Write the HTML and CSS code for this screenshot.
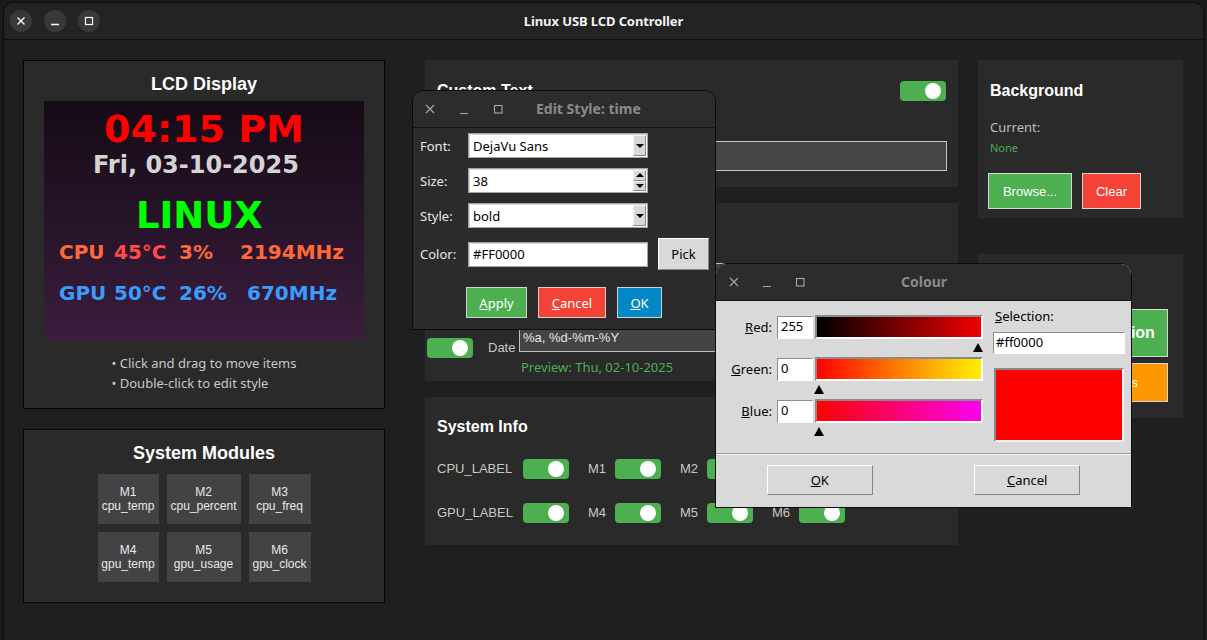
FILE: index.html
```html
<!DOCTYPE html>
<html lang="en">
<head>
<meta charset="utf-8">
<title>Linux USB LCD Controller</title>
<link rel="stylesheet" href="styles.css">
</head>
<body>
<div class="desktop">
  <div class="window">
    <header class="titlebar">
      <div class="wm-buttons">
        <span class="wm-btn"><svg width="10" height="10" viewBox="0 0 10 10"><path d="M1.5 1.5L8.5 8.5M8.5 1.5L1.5 8.5" stroke="#fff" stroke-width="1.3" fill="none"/></svg></span>
        <span class="wm-btn"><svg width="10" height="10" viewBox="0 0 10 10"><path d="M1 8.5H9" stroke="#fff" stroke-width="1.3" fill="none"/></svg></span>
        <span class="wm-btn"><svg width="10" height="10" viewBox="0 0 10 10"><rect x="1.5" y="1.5" width="7" height="7" stroke="#fff" stroke-width="1.2" fill="none"/></svg></span>
      </div>
      <div class="wm-title">Linux USB LCD Controller</div>
      <div></div>
    </header>

    <main class="content">
      <div class="col col-left">
        <section class="panel lcd-panel">
          <h2 class="panel-title">LCD Display</h2>
          <div class="lcd">
            <span class="lcd-item lcd-time">04:15 PM</span>
            <span class="lcd-item lcd-date">Fri, 03-10-2025</span>
            <span class="lcd-item lcd-linux">LINUX</span>
            <span class="lcd-item lcd-small cpu c1">CPU</span>
            <span class="lcd-item lcd-small cpu-temp c2">45°C</span>
            <span class="lcd-item lcd-small cpu c3">3%</span>
            <span class="lcd-item lcd-small cpu c4">2194MHz</span>
            <span class="lcd-item lcd-small gpu c1 r2">GPU</span>
            <span class="lcd-item lcd-small gpu c2 r2">50°C</span>
            <span class="lcd-item lcd-small gpu c3 r2">26%</span>
            <span class="lcd-item lcd-small gpu c4b r2">670MHz</span>
          </div>
          <div class="hint">
            <p>• Click and drag to move items</p>
            <p>• Double-click to edit style</p>
          </div>
        </section>

        <section class="panel modules-panel">
          <h2 class="panel-title">System Modules</h2>
          <div class="module-grid">
            <div class="module"><span>M1</span><span>cpu_temp</span></div>
            <div class="module"><span>M2</span><span>cpu_percent</span></div>
            <div class="module"><span>M3</span><span>cpu_freq</span></div>
            <div class="module"><span>M4</span><span>gpu_temp</span></div>
            <div class="module"><span>M5</span><span>gpu_usage</span></div>
            <div class="module"><span>M6</span><span>gpu_clock</span></div>
          </div>
        </section>
      </div>

      <div class="col col-mid">
        <section class="card custom-card">
          <div class="card-head">
            <h3 class="card-title">Custom Text</h3>
            <span class="toggle"></span>
          </div>
          <div class="text-entry"></div>
        </section>

        <section class="card date-card">
          <div class="card-title-space"></div>
          <div class="dt-row time-row">
            <span class="toggle"></span>
            <span class="dt-label"></span>
            <div class="dt-field">
              <div class="fmt-entry"></div>
              <div class="preview-space"></div>
            </div>
          </div>
          <div class="dt-row date-row">
            <span class="toggle"></span>
            <span class="dt-label">Date</span>
            <div class="dt-field">
              <div class="fmt-entry">%a, %d-%m-%Y</div>
              <div class="preview">Preview: Thu, 02-10-2025</div>
            </div>
          </div>
        </section>

        <section class="card sys-card">
          <h3 class="card-title">System Info</h3>
          <div class="sys-grid">
            <span class="sys-label">CPU_LABEL</span><span class="toggle"></span>
            <span class="sys-label m">M1</span><span class="toggle"></span>
            <span class="sys-label m">M2</span><span class="toggle"></span>
            <span class="sys-label m">M3</span><span class="toggle"></span>
            <span class="sys-label">GPU_LABEL</span><span class="toggle"></span>
            <span class="sys-label m">M4</span><span class="toggle"></span>
            <span class="sys-label m">M5</span><span class="toggle"></span>
            <span class="sys-label m">M6</span><span class="toggle"></span>
          </div>
        </section>
      </div>

      <div class="col col-right">
        <section class="card bg-card">
          <h3 class="card-title">Background</h3>
          <div class="current">Current:</div>
          <div class="none">None</div>
          <div class="btn-row">
            <button class="btn btn-green browse">Browse...</button>
            <button class="btn btn-red clear">Clear</button>
          </div>
        </section>
        <section class="card ctrl-card">
          <div class="card-title-space"></div>
          <button class="btn btn-green btn-big">Apply Configuration</button>
          <button class="btn btn-orange btn-mid">Load Saved Settings</button>
        </section>
      </div>
    </main>
  </div>

  <div class="dialog edit-dialog">
    <div class="dlg-titlebar">
      <span class="dlg-ico"><svg width="10" height="10" viewBox="0 0 10 10"><path d="M1 1L9 9M9 1L1 9" stroke="#a8a8a8" stroke-width="1.1" fill="none"/></svg></span>
      <span class="dlg-ico"><svg width="10" height="10" viewBox="0 0 10 10"><path d="M1 9.5H9" stroke="#a8a8a8" stroke-width="1.1" fill="none"/></svg></span>
      <span class="dlg-ico"><svg width="10" height="10" viewBox="0 0 10 10"><rect x="1.5" y="1.5" width="7.5" height="7.5" stroke="#a8a8a8" stroke-width="1.1" fill="none"/></svg></span>
      <span class="dlg-title edit-title">Edit Style: time</span>
    </div>
    <div class="edit-body">
      <div class="form-grid">
        <span class="f-label">Font:</span>
        <div class="combo"><span class="combo-text">DejaVu Sans</span><span class="combo-btn"><i class="tri-down"></i></span></div>
        <span></span>
        <span class="f-label">Size:</span>
        <div class="combo"><span class="combo-text">38</span><span class="spin-btns"><span class="spin-half"><i class="tri-up"></i></span><span class="spin-half"><i class="tri-down"></i></span></span></div>
        <span></span>
        <span class="f-label">Style:</span>
        <div class="combo"><span class="combo-text">bold</span><span class="combo-btn"><i class="tri-down"></i></span></div>
        <span></span>
        <span class="f-label">Color:</span>
        <div class="combo"><span class="combo-text">#FF0000</span></div>
        <button class="tk-btn pick">Pick</button>
      </div>
      <div class="edit-actions">
        <button class="act act-apply"><u>A</u>pply</button>
        <button class="act act-cancel"><u>C</u>ancel</button>
        <button class="act act-ok"><u>O</u>K</button>
      </div>
    </div>
  </div>

  <div class="dialog colour-dialog">
    <div class="dlg-titlebar">
      <span class="dlg-ico"><svg width="10" height="10" viewBox="0 0 10 10"><path d="M1 1L9 9M9 1L1 9" stroke="#a8a8a8" stroke-width="1.1" fill="none"/></svg></span>
      <span class="dlg-ico"><svg width="10" height="10" viewBox="0 0 10 10"><path d="M1 9.5H9" stroke="#a8a8a8" stroke-width="1.1" fill="none"/></svg></span>
      <span class="dlg-ico"><svg width="10" height="10" viewBox="0 0 10 10"><rect x="1.5" y="1.5" width="7.5" height="7.5" stroke="#a8a8a8" stroke-width="1.1" fill="none"/></svg></span>
      <span class="dlg-title colour-title">Colour</span>
    </div>
    <div class="colour-main">
      <div class="sliders">
        <div class="slider-row">
          <span class="sl-label"><u>R</u>ed:</span>
          <div class="sl-entry">255</div>
          <div class="sl-track"><div class="sl-bar bar-red"></div><i class="sl-marker" style="left:158px"></i></div>
        </div>
        <div class="slider-row">
          <span class="sl-label"><u>G</u>reen:</span>
          <div class="sl-entry">0</div>
          <div class="sl-track"><div class="sl-bar bar-green"></div><i class="sl-marker" style="left:-1px"></i></div>
        </div>
        <div class="slider-row">
          <span class="sl-label"><u>B</u>lue:</span>
          <div class="sl-entry">0</div>
          <div class="sl-track"><div class="sl-bar bar-blue"></div><i class="sl-marker" style="left:-1px"></i></div>
        </div>
      </div>
      <div class="selection">
        <span class="sel-label"><u>S</u>election:</span>
        <div class="sel-entry">#ff0000</div>
        <div class="swatch"></div>
      </div>
    </div>
    <div class="colour-actions">
      <div class="ca-cell"><button class="tk-btn big"><u>O</u>K</button></div>
      <div class="ca-cell"><button class="tk-btn big"><u>C</u>ancel</button></div>
    </div>
  </div>
</div>
</body>
</html>
```

FILE: styles.css
```css
* { box-sizing: border-box; }
html, body { margin: 0; padding: 0; }
body {
  width: 1207px;
  height: 640px;
  overflow: hidden;
  background: #1a1a1a;
  font-family: "Liberation Sans", Arial, sans-serif;
}
p, h2, h3 { margin: 0; }
button { font: inherit; margin: 0; padding: 0; cursor: default; }

.desktop {
  position: relative;
  width: 1207px;
  height: 640px;
  padding: 2px 0 0 3px;
}

.window {
  width: 1201px;
  height: 660px;
  background: #1f1f1f;
  border: 1px solid #0d0d0d;
  border-bottom: none;
  border-radius: 10px 10px 0 0;
  overflow: hidden;
}

/* ---------- title bar ---------- */
.titlebar {
  height: 37px;
  background: #232323;
  border-bottom: 1px solid #101010;
  display: grid;
  grid-template-columns: 1fr auto 1fr;
  align-items: center;
}
.wm-buttons {
  display: flex;
  gap: 12px;
  padding-left: 6px;
}
.wm-btn {
  width: 22px;
  height: 22px;
  border-radius: 50%;
  background: #393939;
  display: flex;
  align-items: center;
  justify-content: center;
}
.wm-title {
  color: #f2f2f2;
  font-family: "Noto Sans", sans-serif;
  font-weight: 700;
  font-size: 13px;
  letter-spacing: -0.1px;
}

/* ---------- main layout ---------- */
.content {
  display: flex;
  align-items: flex-start;
  padding: 20px 0 0 19px;
}
.col { display: flex; flex-direction: column; }
.col-left { width: 362px; }
.col-mid { width: 533px; margin-left: 40px; }
.col-right { width: 205px; margin-left: 20px; }

.panel {
  background: #2a2a2a;
  border: 1px solid #050505;
  display: flex;
  flex-direction: column;
  align-items: center;
}
.panel-title {
  color: #ffffff;
  font-size: 18px;
  line-height: 22px;
  font-weight: 700;
}

/* LCD */
.lcd-panel { height: 349px; padding-top: 12px; }
.lcd-panel .panel-title { margin-bottom: 6px; }
.lcd {
  position: relative;
  width: 320px;
  height: 240px;
  background: linear-gradient(180deg, #160a16 0%, #251327 45%, #3b1d3d 100%);
  overflow: hidden;
}
.lcd-item {
  position: absolute;
  font-family: "DejaVu Sans", sans-serif;
  font-weight: 700;
  line-height: 1;
  white-space: nowrap;
}
.lcd-time { font-size: 38px; color: #ff0000; left: 60px; top: 9px; }
.lcd-date { font-size: 24px; color: #d4d4d4; left: 49px; top: 52px; }
.lcd-linux { font-size: 37px; color: #00ff00; left: 92px; top: 96px; }
.lcd-small { font-size: 20px; top: 141px; }
.lcd-small.r2 { top: 182px; }
.cpu { color: #ff6838; }
.cpu-temp { color: #ff4c48; }
.gpu { color: #3a9cff; }
.c1 { left: 15px; }
.c2 { left: 70px; }
.c3 { left: 135px; }
.c4 { left: 196px; }
.c4b { left: 203px; }

.hint {
  margin-top: 12px;
  color: #c8c8c8;
  font-family: "Noto Sans", sans-serif;
  font-size: 13px;
  line-height: 20px;
  text-align: left;
}

/* modules */
.modules-panel { margin-top: 20px; height: 174px; padding-top: 12px; }
.module-grid {
  margin-top: 10px;
  display: grid;
  grid-template-columns: 61px 74px 62px;
  grid-auto-rows: 50px;
  gap: 8px;
}
.module {
  background: #434343;
  color: #e8e8e8;
  font-size: 12px;
  line-height: 14px;
  display: flex;
  flex-direction: column;
  align-items: center;
  justify-content: center;
}

/* cards */
.card {
  background: #2a2a2a;
}
.card-title {
  color: #ffffff;
  font-size: 16px;
  line-height: 20px;
  font-weight: 700;
}
.card-title-space { height: 20px; }
.toggle {
  position: relative;
  display: block;
  width: 46px;
  height: 20px;
  background: #4caf50;
  border-radius: 4px;
}
.toggle::after {
  content: "";
  position: absolute;
  left: 25px;
  top: 2px;
  width: 16px;
  height: 16px;
  border-radius: 50%;
  background: #ffffff;
}

.custom-card { height: 127px; padding: 21px 12px 0 12px; }
.card-head {
  display: flex;
  justify-content: space-between;
  align-items: center;
  height: 20px;
}
.text-entry {
  margin-top: 40px;
  height: 30px;
  margin-right: -1px;
  background: #454545;
  border: 1px solid #c6c6c6;
}

.date-card { margin-top: 16px; height: 178px; padding: 16px 11px 0 2px; }
.dt-row { display: flex; align-items: flex-start; }
.time-row { margin-top: 24px; }
.date-row { margin-top: 20px; }
.dt-row .toggle { margin-top: 9px; flex: none; }
.dt-label {
  width: 31px;
  margin-left: 15px;
  margin-top: 11px;
  color: #c8c8c8;
  font-size: 13px;
  line-height: 16px;
  flex: none;
}
.dt-field { flex: 1; }
.fmt-entry {
  height: 23px;
  background: #444444;
  border: 1px solid #bdbdbd;
  color: #e6e6e6;
  font-size: 13px;
  line-height: 16px;
  padding: 0 3px;
}
.preview {
  margin-top: 7px;
  padding-left: 2px;
  color: #4caf50;
  font-family: "Noto Sans", sans-serif;
  font-size: 13px;
  line-height: 16px;
}
.preview-space { margin-top: 7px; height: 16px; }

.sys-card { margin-top: 16px; height: 148px; padding: 20px 12px 0 12px; }
.sys-grid {
  margin-top: 22px;
  display: grid;
  grid-template-columns: 86px 46px 46px 46px 46px 46px 46px 46px;
  grid-auto-rows: 20px;
  row-gap: 24px;
  align-items: center;
}
.sys-label {
  color: #c8c8c8;
  font-size: 13px;
  line-height: 16px;
  white-space: nowrap;
}
.sys-label.m { padding-left: 19px; }

.bg-card { height: 158px; padding: 21px 12px 0 10px; }
.bg-card .card-title { margin-left: 2px; }
.current {
  margin: 17px 0 0 2px;
  color: #bdbdbd;
  font-family: "Noto Sans", sans-serif;
  font-size: 13px;
  line-height: 18px;
}
.none {
  margin: 5px 0 0 2px;
  color: #4caf50;
  font-family: "Noto Sans", sans-serif;
  font-size: 11px;
  line-height: 14px;
}
.btn-row { display: flex; gap: 10px; margin-top: 18px; }
.btn {
  display: block;
  border: 1px solid #d6d6d6;
  color: #ffffff;
  font-size: 13px;
  text-align: center;
}
.btn-green { background: #4caf50; }
.btn-red { background: #f44336; }
.btn-orange { background: #ff9800; }
.browse { width: 84px; height: 36px; }
.clear { width: 59px; height: 36px; }

.ctrl-card { margin-top: 36px; height: 164px; padding: 20px 15px 0 10px; }
.btn-big { width: 100%; height: 48px; margin-top: 15px; font-size: 16px; font-weight: 700; }
.btn-mid { width: 100%; height: 39px; margin-top: 6px; }

/* ---------- dialogs ---------- */
.dialog {
  position: absolute;
  border: 1px solid #0c0c0c;
  border-radius: 11px 11px 0 0;
  overflow: hidden;
  font-family: "Noto Sans", sans-serif;
}
.dlg-titlebar {
  height: 37px;
  background: #2c2c2c;
  border-bottom: 1px solid #141414;
  display: flex;
  align-items: center;
  padding-left: 12px;
  gap: 24px;
}
.dlg-ico { width: 10px; height: 10px; display: flex; }
.dlg-title {
  color: #8a8a8a;
  font-weight: 700;
  font-size: 14px;
  margin-top: -1px;
}
.edit-title { margin-left: 9px; }
.colour-title { margin-left: 73px; }

.edit-dialog {
  left: 412px;
  top: 90px;
  width: 304px;
  height: 240px;
  background: #2b2b2b;
}
.edit-body { padding-top: 5px; }
.form-grid {
  display: grid;
  grid-template-columns: 38px 180px 51px;
  grid-template-rows: 25px 25px 25px 32px;
  column-gap: 10px;
  row-gap: 10px;
  padding-left: 7px;
  align-items: center;
}
.f-label { color: #e8e8e8; font-size: 13px; }
.combo {
  position: relative;
  height: 25px;
  background: #ffffff;
  border: 1px solid #a4a4a4;
  box-shadow: inset 1px 1px 0 #d8d8d8;
  display: flex;
  align-items: center;
}
.combo-text { padding-left: 4px; color: #000; font-size: 13px; flex: 1; }
.combo-btn {
  width: 13px;
  height: 21px;
  margin-right: 1px;
  background: #d9d9d9;
  border: 1px solid;
  border-color: #f4f4f4 #8a8a8a #8a8a8a #f4f4f4;
  display: flex;
  align-items: center;
  justify-content: center;
}
.spin-btns { width: 13px; height: 21px; margin-right: 1px; display: flex; flex-direction: column; }
.spin-half {
  flex: 1;
  background: #d9d9d9;
  border: 1px solid;
  border-color: #f4f4f4 #8a8a8a #8a8a8a #f4f4f4;
  display: flex;
  align-items: center;
  justify-content: center;
}
.tri-down, .tri-up { display: block; width: 0; height: 0; border-left: 4px solid transparent; border-right: 4px solid transparent; }
.tri-down { border-top: 4px solid #000; }
.tri-up { border-bottom: 4px solid #000; }

.tk-btn {
  background: #d9d9d9;
  border: 1px solid;
  border-color: #ffffff #858585 #858585 #ffffff;
  color: #000;
  font-family: "Noto Sans", sans-serif;
  font-size: 13px;
}
.pick { width: 51px; height: 32px; }

.edit-actions {
  display: flex;
  justify-content: center;
  gap: 11px;
  margin-top: 17px;
}
.act {
  height: 31px;
  border: 1px solid #d2d2d2;
  color: #ffffff;
  font-family: "Noto Sans", sans-serif;
  font-size: 13px;
}
.act-apply { width: 61px; background: #4caf50; }
.act-cancel { width: 68px; background: #f44336; }
.act-ok { width: 45px; background: #0288c6; }

.colour-dialog {
  left: 715px;
  top: 263px;
  width: 417px;
  height: 245px;
  background: #d9d9d9;
}
.colour-dialog .dlg-titlebar { padding-left: 13px; gap: 23px; }
.colour-main {
  height: 153px;
  display: flex;
  padding-top: 6px;
  border-bottom: 1px solid #9c9c9c;
}
.sliders { padding-top: 8px; width: 267px; }
.slider-row {
  display: flex;
  align-items: center;
  height: 24px;
  margin-bottom: 18px;
}
.sl-label {
  width: 56px;
  margin-right: 5px;
  text-align: right;
  color: #000;
  font-size: 13px;
}
.sl-entry {
  width: 36px;
  height: 23px;
  margin-right: 2px;
  background: #fff;
  border: 1px solid;
  border-color: #8e8e8e #ffffff #ffffff #8e8e8e;
  color: #000;
  font-size: 13px;
  line-height: 18px;
  padding-left: 3px;
}
.sl-track { position: relative; width: 168px; height: 24px; }
.sl-bar {
  width: 100%;
  height: 100%;
  border: 2px solid;
  border-color: #8a8a8a #ffffff #ffffff #8a8a8a;
}
.bar-red { background: linear-gradient(90deg, #000000, #f00000); }
.bar-green { background: linear-gradient(90deg, #ff0000, #ff7f00 50%, #fff000); }
.bar-blue { background: linear-gradient(90deg, #ff0000, #ff00f0); }
.sl-marker {
  position: absolute;
  top: 28px;
  width: 0;
  height: 0;
  border-left: 5px solid transparent;
  border-right: 5px solid transparent;
  border-bottom: 9px solid #000;
}
.selection { margin-left: 10px; width: 132px; display: flex; flex-direction: column; }
.sel-label { color: #000; font-size: 13px; line-height: 18px; padding-left: 2px; }
.sel-entry {
  margin-top: 7px;
  height: 22px;
  background: #fff;
  border: 1px solid;
  border-color: #8e8e8e #ffffff #ffffff #8e8e8e;
  color: #000;
  font-size: 13px;
  line-height: 19px;
  padding-left: 2px;
}
.swatch {
  margin: 14px 0 0 1px;
  width: 130px;
  height: 74px;
  background: #ff0000;
  border: 2px solid;
  border-color: #8a8a8a #f2f2f2 #f2f2f2 #8a8a8a;
}
.colour-actions {
  display: grid;
  grid-template-columns: 1fr 1fr;
  padding-top: 10px;
  border-top: 1px solid #f4f4f4;
}
.ca-cell { display: flex; justify-content: center; }
.tk-btn.big { width: 106px; height: 30px; }
```
